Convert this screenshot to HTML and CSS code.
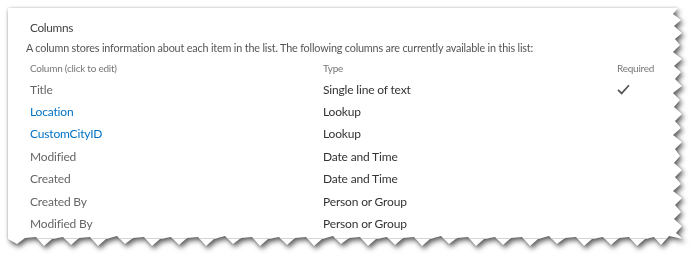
FILE: index.html
```html
<!DOCTYPE html>
<html lang="en">
<head>
  <meta charset="UTF-8">
  <title>List Settings | Columns</title>
  <link rel="stylesheet" href="styles.css">
</head>
<body>
  <div class="sheet-shadow">
  <div class="sheet">
    <h2 class="section-title">Columns</h2>
    <p class="section-desc">A column stores information about each item in the list. The following columns are currently available in this list:</p>
    <div class="columns-list">
      <div class="col-head">Column (click to edit)</div>
      <div class="col-head">Type</div>
      <div class="col-head">Required</div>

      <div class="col-name">Title</div>
      <div class="col-type">Single line of text</div>
      <div class="col-req">
        <svg class="check" width="13" height="11" viewBox="0 0 13 11"><polyline points="1,5.8 4.6,9.4 12,1.2" fill="none" stroke="#555" stroke-width="1.7"/></svg>
      </div>

      <div class="col-name"><a href="#">Location</a></div>
      <div class="col-type">Lookup</div>
      <div class="col-req"></div>

      <div class="col-name"><a href="#">CustomCityID</a></div>
      <div class="col-type">Lookup</div>
      <div class="col-req"></div>

      <div class="col-name">Modified</div>
      <div class="col-type">Date and Time</div>
      <div class="col-req"></div>

      <div class="col-name">Created</div>
      <div class="col-type">Date and Time</div>
      <div class="col-req"></div>

      <div class="col-name">Created By</div>
      <div class="col-type">Person or Group</div>
      <div class="col-req"></div>

      <div class="col-name">Modified By</div>
      <div class="col-type">Person or Group</div>
      <div class="col-req"></div>
    </div>
  </div>
  </div>
</body>
</html>
```

FILE: styles.css
```css
body {
  margin: 0;
  background-color: #fff;
  font-family: Lato, "Open Sans", sans-serif;
  color: #444;
}

/* torn paper look: shadow on the wrapper, torn edges clipped on the sheet */
.sheet-shadow {
  padding: 8px;
  filter: drop-shadow(0 0 1.5px rgba(0, 0, 0, 0.2)) drop-shadow(2px 3px 2.5px rgba(0, 0, 0, 0.6));
}

.sheet {
  width: 675px;
  height: 238px;
  background-color: #fff;
  box-sizing: border-box;
  padding: 12px 0 0 18px;
  clip-path: polygon(0 0, 670px 0, 665px 6px, 673px 12px, 666px 18px, 674px 25px, 667px 31px, 672px 37px, 665px 44px, 674px 51px, 666px 58px, 673px 64px, 667px 71px, 674px 78px, 665px 85px, 672px 92px, 666px 99px, 674px 106px, 667px 113px, 673px 120px, 665px 127px, 674px 134px, 667px 141px, 672px 148px, 666px 155px, 674px 162px, 667px 169px, 673px 176px, 665px 183px, 674px 190px, 667px 197px, 673px 204px, 666px 211px, 674px 218px, 668px 225px, 675px 231px,
    661px 228px, 653px 237px, 646px 229px, 637px 231px, 629px 238px, 621px 229px, 611px 230px, 603px 237px, 595px 229px, 584px 231px, 576px 238px, 568px 229px, 557px 230px, 549px 236px, 541px 228px, 530px 231px, 522px 238px, 514px 229px, 503px 230px, 495px 237px, 487px 229px, 476px 231px, 468px 238px, 460px 229px, 449px 230px, 441px 236px, 433px 228px, 422px 231px, 414px 238px, 406px 229px, 395px 230px, 387px 237px, 379px 229px, 368px 231px, 360px 238px, 352px 229px, 341px 230px, 333px 236px, 325px 228px, 314px 231px, 306px 238px, 298px 229px, 287px 230px, 279px 237px, 271px 229px, 260px 231px, 252px 238px, 244px 229px, 233px 230px, 225px 236px, 217px 228px, 206px 231px, 198px 238px, 190px 229px, 179px 230px, 171px 237px, 163px 229px, 152px 231px, 144px 238px, 136px 229px, 125px 230px, 117px 236px, 109px 228px, 98px 231px, 90px 238px, 82px 229px, 71px 230px, 63px 237px, 55px 229px, 44px 231px, 36px 238px, 28px 229px, 17px 230px, 9px 236px, 0 231px);
}

.section-title {
  margin: 0 0 0 4px;
  font-size: 11.8px;
  font-weight: 400;
  letter-spacing: -0.3px;
  line-height: 16px;
  color: #444;
}

.section-desc {
  margin: 4px 0 0 0;
  font-size: 10.8px;
  letter-spacing: -0.17px;
  line-height: 16px;
  color: #555;
  white-space: nowrap;
}

.columns-list {
  display: grid;
  grid-template-columns: 293px 294px 1fr;
  grid-template-rows: 20px;
  grid-auto-rows: 22.4px;
  margin-top: 2px;
  padding-bottom: 3px;
  border-bottom: 1px solid #d4d4d4;
  align-items: center;
}

.columns-list > div {
  padding-left: 4px;
  white-space: nowrap;
}

.col-head {
  font-size: 10px;
  letter-spacing: -0.25px;
  color: #777;
}

.col-name {
  font-size: 12px;
  letter-spacing: -0.17px;
  color: #666;
}

.col-name a {
  color: #0072c6;
  text-decoration: none;
}

.col-type {
  font-size: 12px;
  letter-spacing: -0.17px;
  color: #333;
}

.check {
  display: block;
  margin-top: 1px;
}
```
